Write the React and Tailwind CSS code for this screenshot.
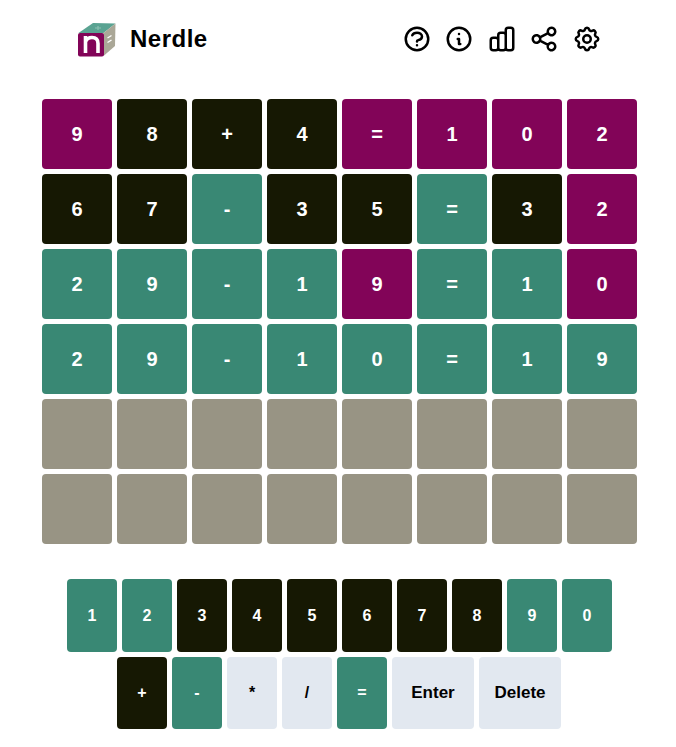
import React from 'react'
import {
  HiOutlineQuestionMarkCircle,
  HiOutlineInformationCircle,
  HiOutlineChartBar,
  HiOutlineShare,
  HiOutlineCog,
} from 'react-icons/hi'

const colors = {
  p: 'bg-[#820458] text-white',
  b: 'bg-[#161803] text-white',
  g: 'bg-[#398874] text-white',
  e: 'bg-[#989484] text-white',
  n: 'bg-slate-200 text-black',
}

const rows = [
  [['9', 'p'], ['8', 'b'], ['+', 'b'], ['4', 'b'], ['=', 'p'], ['1', 'p'], ['0', 'p'], ['2', 'p']],
  [['6', 'b'], ['7', 'b'], ['-', 'g'], ['3', 'b'], ['5', 'b'], ['=', 'g'], ['3', 'b'], ['2', 'p']],
  [['2', 'g'], ['9', 'g'], ['-', 'g'], ['1', 'g'], ['9', 'p'], ['=', 'g'], ['1', 'g'], ['0', 'p']],
  [['2', 'g'], ['9', 'g'], ['-', 'g'], ['1', 'g'], ['0', 'g'], ['=', 'g'], ['1', 'g'], ['9', 'g']],
  Array(8).fill(['', 'e']),
  Array(8).fill(['', 'e']),
]

const keysTop = [
  ['1', 'g'], ['2', 'g'], ['3', 'b'], ['4', 'b'], ['5', 'b'],
  ['6', 'b'], ['7', 'b'], ['8', 'b'], ['9', 'g'], ['0', 'g'],
]
const keysBottom = [['+', 'b'], ['-', 'g'], ['*', 'n'], ['/', 'n'], ['=', 'g']]

function Logo() {
  return (
    <svg width="38" height="35" viewBox="0 0 38 35">
      <path d="M0.5 11 L15 1 L37.5 1.5 L25.5 11 Z" fill="#5aa392" />
      <path d="M25.5 11 L37.5 1.5 L37 24 L25.5 34 Z" fill="#aaa797" />
      <rect x="0" y="11" width="26" height="23.5" rx="2" fill="#820458" />
      <path d="M7.5 31 V14 M7.5 20 Q9 15.5 14 15.5 Q20 15.5 20 21.5 V31" fill="none" stroke="#fff" strokeWidth="3.6" />
      <path d="M29.5 16 L33.5 13.5 M29.5 20.5 L33.5 18" stroke="#fff" strokeWidth="1.4" />
      <path d="M17 6 L23 6 M20 4 L20 8" stroke="#8cc0b2" strokeWidth="1.2" />
    </svg>
  )
}

function App() {
  return (
    <div className="min-h-screen w-full bg-white font-['Liberation_Sans',Arial,sans-serif]">
      {/* header */}
      <div className="flex items-center h-[78px] pl-[78px]">
        <Logo />
        <h1 className="ml-[14px] text-2xl font-bold text-black tracking-[0.5px]">Nerdle</h1>
        <div className="flex items-center gap-[12.5px] ml-[194px] text-black">
          <HiOutlineQuestionMarkCircle size={30} />
          <HiOutlineInformationCircle size={30} />
          <HiOutlineChartBar size={30} />
          <HiOutlineShare size={30} />
          <HiOutlineCog size={30} />
        </div>
      </div>

      {/* guesses */}
      <div className="flex flex-col gap-[5px] pl-[42px] pt-[21px]">
        {rows.map((row, i) => (
          <div key={i} className="flex gap-[5px]">
            {row.map(([ch, c], j) => (
              <div key={j} className={`w-[70px] h-[70px] rounded flex items-center justify-center text-xl font-bold ${colors[c]}`}>
                {ch}
              </div>
            ))}
          </div>
        ))}
      </div>

      {/* keyboard */}
      <div className="flex flex-col gap-[5px] pt-[35px] pl-[67px]">
        <div className="flex gap-[5px]">
          {keysTop.map(([ch, c]) => (
            <div key={ch} className={`w-[50px] h-[73px] rounded flex items-center justify-center text-base font-bold ${colors[c]}`}>
              {ch}
            </div>
          ))}
        </div>
        <div className="flex gap-[5px] pl-[50px]">
          {keysBottom.map(([ch, c]) => (
            <div key={ch} className={`w-[50px] h-[72px] rounded flex items-center justify-center text-base font-bold ${colors[c]}`}>
              {ch}
            </div>
          ))}
          <div className="w-[82px] h-[72px] rounded flex items-center justify-center text-[17px] font-bold bg-slate-200 text-black">Enter</div>
          <div className="w-[82px] h-[72px] rounded flex items-center justify-center text-[17px] font-bold bg-slate-200 text-black">Delete</div>
        </div>
      </div>
    </div>
  )
}

export default App
